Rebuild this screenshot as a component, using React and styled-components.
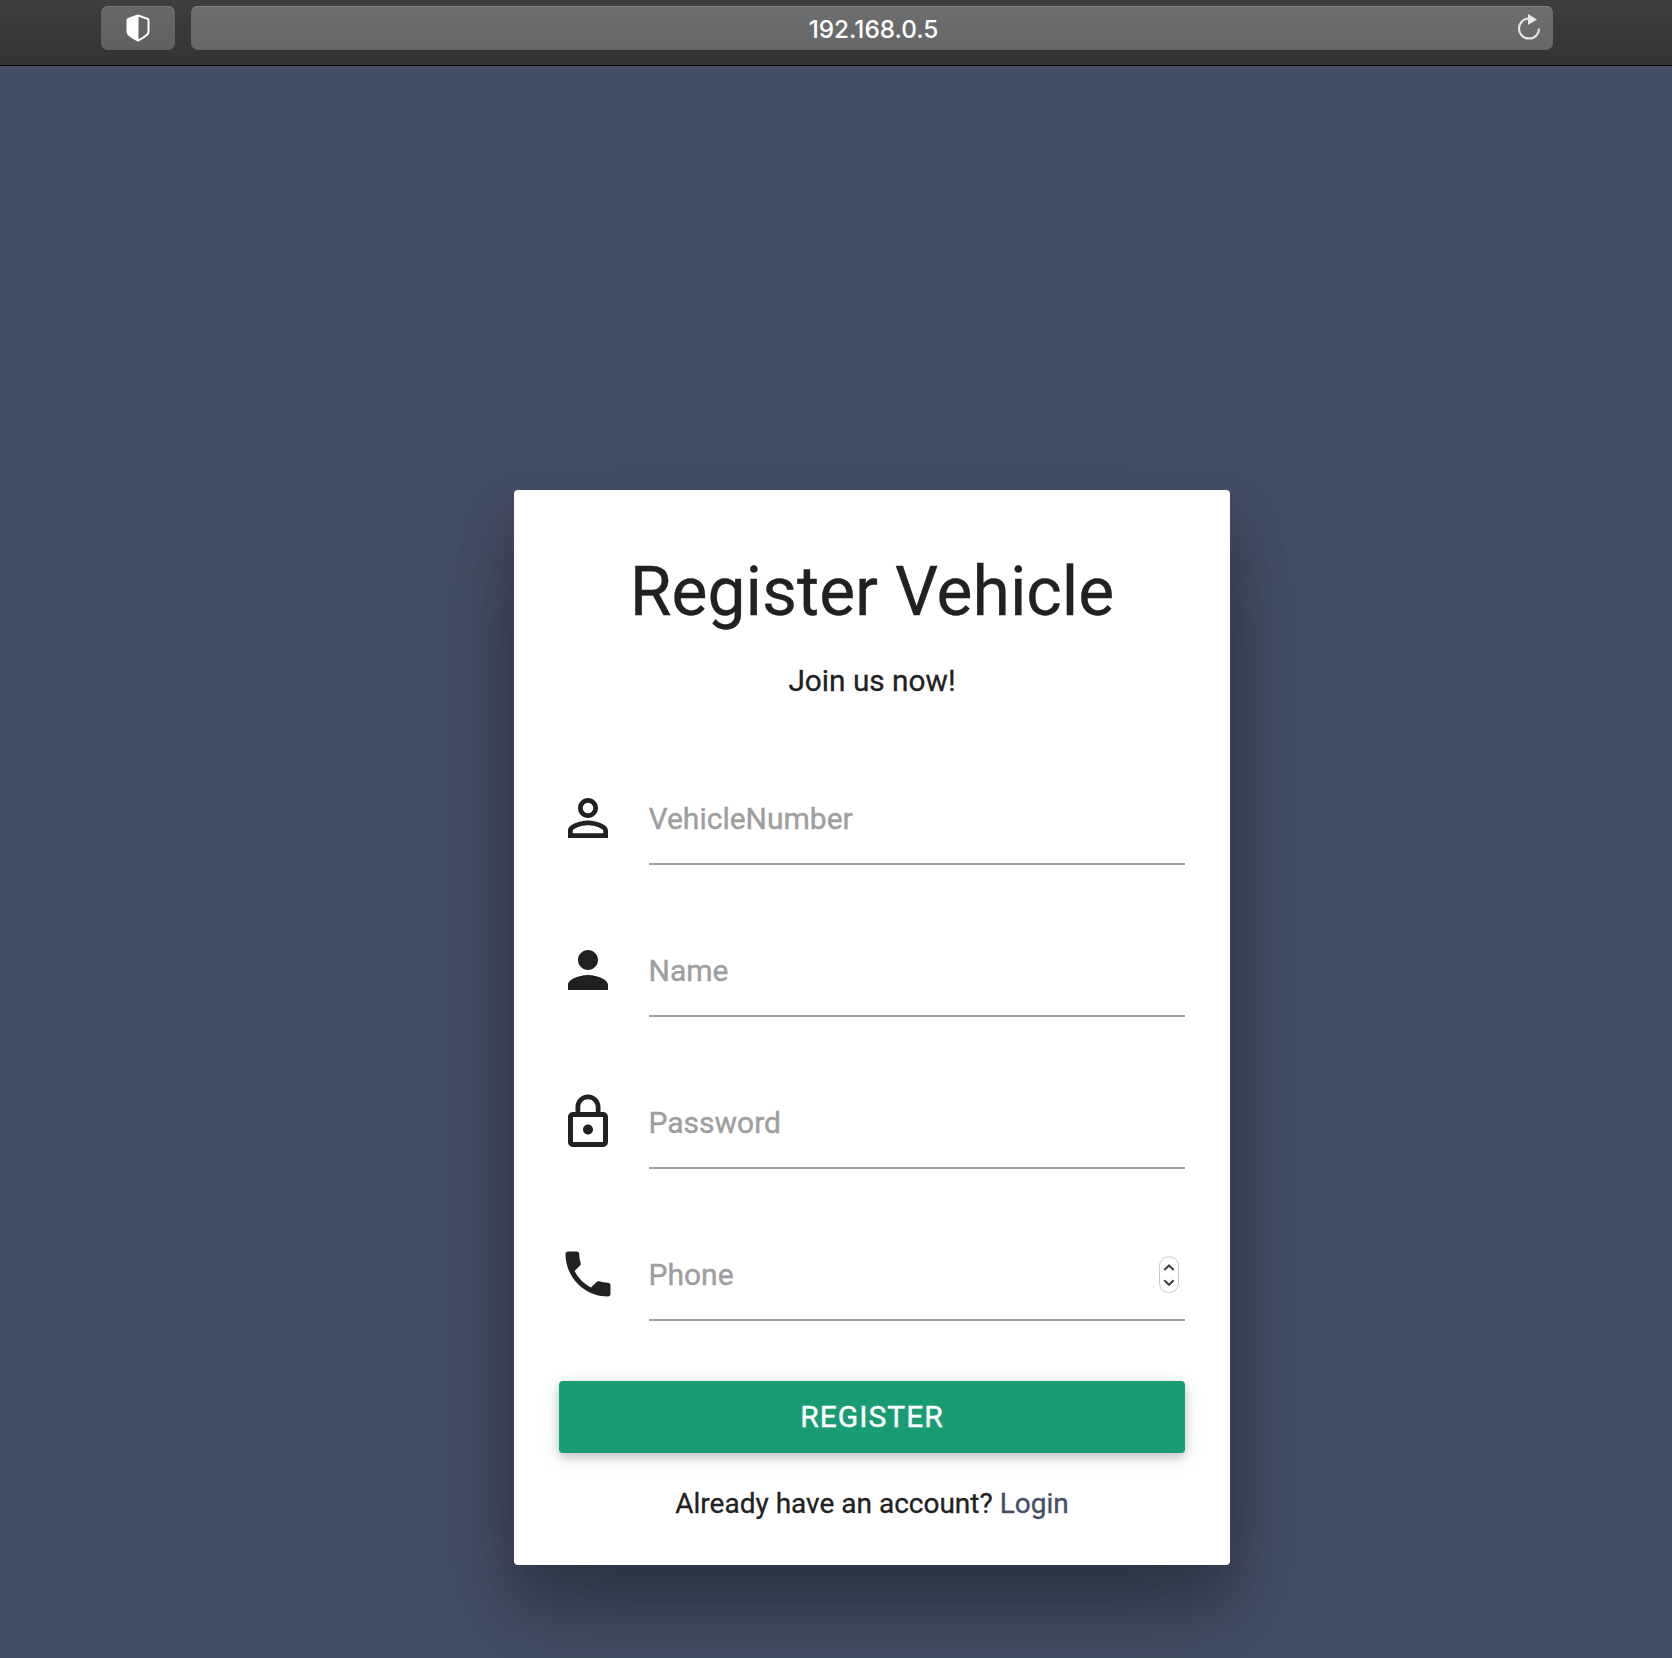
import React from "react";
import styled, { createGlobalStyle } from "styled-components";

const Global = createGlobalStyle`
  *, *::before, *::after { box-sizing: border-box; }
  html, body { margin: 0; padding: 0; }
  body {
    background: #454d66;
    color: #212121;
    font-family: Roboto, "Liberation Sans", sans-serif;
    -webkit-text-stroke: 0.3px currentColor;
    overflow: hidden;
  }
`;

const Window = styled.div`
  display: flex;
  flex-direction: column;
  width: 1672px;
  height: 1658px;
  overflow: hidden;
`;

const Toolbar = styled.header`
  display: flex;
  align-items: flex-start;
  gap: 16px;
  flex: none;
  height: 66px;
  padding: 6px 119px 0 101px;
  background: linear-gradient(#3d3e40, #323334);
  border-bottom: 1px solid #000;
`;

const ToolbarItem = styled.div`
  display: flex;
  align-items: center;
  height: 44px;
  border-radius: 7px;
  background: linear-gradient(#6d6e70, #666769);
  box-shadow: inset 0 1px 0 #828385;
`;

const ShieldButton = styled(ToolbarItem)`
  justify-content: center;
  width: 74px;
  background: linear-gradient(#666769, #5f6062);
  box-shadow: inset 0 1px 0 #77787a;
`;

const AddressBar = styled(ToolbarItem)`
  flex: 1;
  padding: 0 12px 0 39px;
`;

const Address = styled.span`
  flex: 1;
  padding-top: 2px;
  text-align: center;
  color: #fff;
  font: 500 24.3px/44px Inter, "Liberation Sans", sans-serif;
  -webkit-text-stroke: 0;
`;

const Page = styled.main`
  display: flex;
  justify-content: center;
  align-items: flex-start;
  flex: 1;
  padding: 424px 0 0 72px;
`;

const Card = styled.section`
  display: flex;
  flex-direction: column;
  width: 716px;
  height: 1075px;
  padding: 62px 45px 0;
  border-radius: 4px;
  background: #fff;
  box-shadow:
    0 32px 56px 0 rgba(0, 0, 0, 0.22),
    0 50px 100px 0 rgba(0, 0, 0, 0.2);
`;

const Title = styled.h1`
  margin: 0;
  font-size: 67.8px;
  font-weight: 400;
  line-height: 80px;
  text-align: center;
`;

const Note = styled.p`
  margin: ${(p) => p.$top}px 0 0;
  font-size: ${(p) => p.$size}px;
  line-height: 40px;
  text-align: center;
`;

const Fields = styled.div`
  display: flex;
  flex-direction: column;
  gap: 75px;
  margin-top: 87px;
`;

const FieldRow = styled.label`
  display: flex;
  align-items: flex-start;
  gap: 31px;
  height: 77px;
`;

const FieldIcon = styled.svg`
  flex: none;
  width: 60px;
  height: 60px;
  margin-left: -1px;
  fill: #212121;
`;

const InputLine = styled.div`
  display: flex;
  flex: 1;
  height: 77px;
  padding-right: 6px;
  border-bottom: 2px solid #9e9e9e;
`;

const Input = styled.input`
  flex: 1;
  min-width: 0;
  height: 62px;
  margin-left: -0.5px;
  padding: 0;
  border: 0;
  outline: 0;
  background: transparent;
  font: 400 30px/62px Roboto, "Liberation Sans", sans-serif;
  &::placeholder { color: #9e9e9e; opacity: 1; -webkit-text-stroke: 0.4px #9e9e9e; }
`;

const Stepper = styled.svg`
  flex: none;
  width: 20px;
  height: 37px;
  margin-top: 12px;
`;

const RegisterButton = styled.button`
  height: 72px;
  margin-top: 60px;
  padding: 0;
  border: 0;
  border-radius: 4px;
  background: #199b74;
  color: #fff;
  font: 400 30px/70px Roboto, "Liberation Sans", sans-serif;
  letter-spacing: 1px;
  -webkit-text-stroke: 0.4px #fff;
  box-shadow:
    0 4px 10px 0 rgba(0, 0, 0, 0.16),
    0 4px 20px 0 rgba(0, 0, 0, 0.12);
`;

const Link = styled.a`
  color: #454d66;
  text-decoration: none;
`;

const FIELDS = [
  {
    label: "VehicleNumber",
    path: "M12 5.9a2.1 2.1 0 1 1 0 4.2 2.1 2.1 0 0 1 0-4.2m0 9c2.97 0 6.1 1.46 6.1 2.1v1.1H5.9V17c0-.64 3.13-2.1 6.1-2.1M12 4C9.79 4 8 5.79 8 8s1.79 4 4 4 4-1.79 4-4-1.79-4-4-4zm0 9c-2.67 0-8 1.34-8 4v3h16v-3c0-2.66-5.33-4-8-4z",
  },
  {
    label: "Name",
    path: "M12 12c2.21 0 4-1.79 4-4s-1.79-4-4-4-4 1.79-4 4 1.79 4 4 4zm0 2c-2.67 0-8 1.34-8 4v2h16v-2c0-2.66-5.33-4-8-4z",
  },
  {
    label: "Password",
    path: "M12 17c1.1 0 2-.9 2-2s-.9-2-2-2-2 .9-2 2 .9 2 2 2zm6-9h-1V6c0-2.76-2.24-5-5-5S7 3.24 7 6v2H6c-1.1 0-2 .9-2 2v10c0 1.1.9 2 2 2h12c1.1 0 2-.9 2-2V10c0-1.1-.9-2-2-2zM8.9 6c0-1.71 1.39-3.1 3.1-3.1s3.1 1.39 3.1 3.1v2H8.9V6zM18 20H6V10h12v10z",
  },
  {
    label: "Phone",
    stepper: true,
    path: "M6.62 10.79c1.44 2.83 3.76 5.14 6.59 6.59l2.2-2.2c.27-.27.67-.36 1.02-.24 1.12.37 2.33.57 3.57.57.55 0 1 .45 1 1V20c0 .55-.45 1-1 1-9.39 0-17-7.61-17-17 0-.55.45-1 1-1h3.5c.55 0 1 .45 1 1 0 1.25.2 2.45.57 3.57.11.35.03.74-.25 1.02l-2.2 2.2z",
  },
];

function Shield() {
  return (
    <svg width="24" height="28" viewBox="0 0 24 28">
      <path d="M12 1.5 2.2 4.9Q1.5 5.2 1.5 6v11.5q0 1.8 1.5 3.2Q6 23.5 12 26.7q6-3.2 9-6 1.5-1.4 1.5-3.2V6q0-.8-.7-1.1z" fill="none" stroke="#fff" strokeWidth="2" strokeLinejoin="round" />
      <path d="M12.5 1.5 2.2 4.9Q1.5 5.2 1.5 6v11.5q0 1.8 1.5 3.2Q6 23.5 12.5 26.7z" fill="#fff" />
    </svg>
  );
}

function Reload() {
  return (
    <svg width="24" height="28" viewBox="0 0 24 28">
      <path d="M22 14.6A10 10 0 1 1 12 4.6" fill="none" stroke="#e8e8e8" strokeWidth="2" />
      <path d="M11 0v11l9-5.5z" fill="#e8e8e8" />
    </svg>
  );
}

export default function App() {
  return (
    <Window>
      <Global />
      <Toolbar>
        <ShieldButton><Shield /></ShieldButton>
        <AddressBar>
          <Address>192.168.0.5</Address>
          <Reload />
        </AddressBar>
      </Toolbar>
      <Page>
        <Card>
          <Title>Register Vehicle</Title>
          <Note $top={29} $size={29.8}>Join us now!</Note>
          <Fields>
            {FIELDS.map((f) => (
              <FieldRow key={f.label}>
                <FieldIcon viewBox="0 0 24 24"><path d={f.path} /></FieldIcon>
                <InputLine>
                  <Input placeholder={f.label} />
                  {f.stepper && (
                    <Stepper viewBox="0 0 20 37">
                      <rect x="0.5" y="0.8" width="19" height="35.7" rx="9" fill="#fff" stroke="#c8c8c8" />
                      <path d="M5.3 14 10 9.5l4.7 4.5M5.3 24.2 10 28.7l4.7-4.5" fill="none" stroke="#444" strokeWidth="2.2" />
                    </Stepper>
                  )}
                </InputLine>
              </FieldRow>
            ))}
          </Fields>
          <RegisterButton>REGISTER</RegisterButton>
          <Note $top={31} $size={28}>
            Already have an account? <Link>Login</Link>
          </Note>
        </Card>
      </Page>
    </Window>
  );
}
